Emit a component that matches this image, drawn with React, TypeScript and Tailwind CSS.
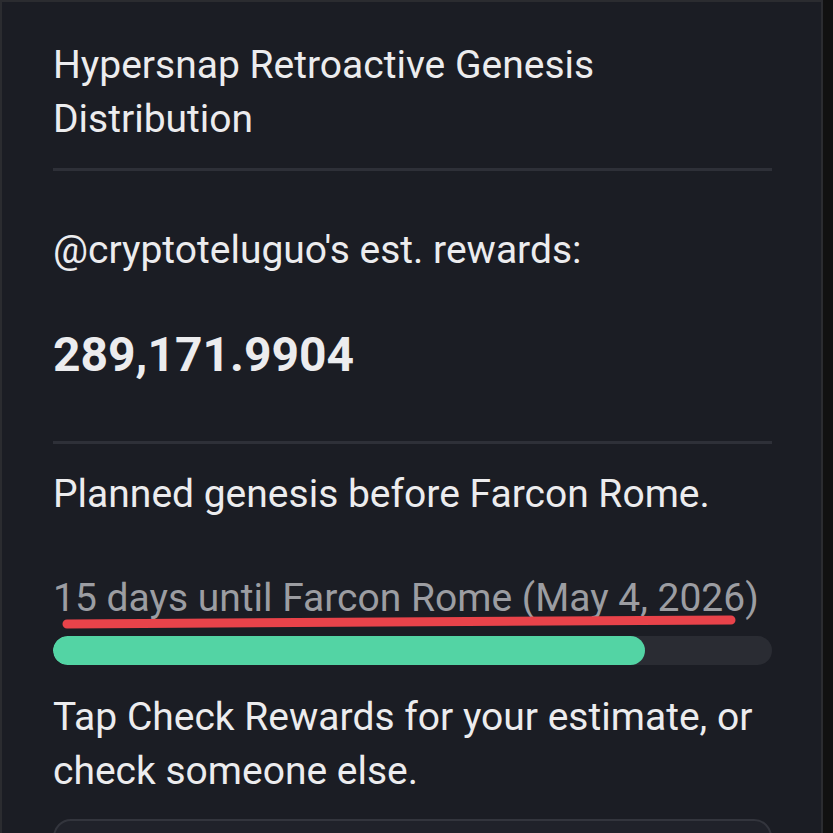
import React from 'react';

export default function App() {
  const progress = 82.3;

  return (
    <div className="w-[833px] h-[833px] overflow-hidden bg-[#111111]" style={{ fontFamily: 'Roboto, "Noto Sans", sans-serif' }}>
      <div className="relative w-[823px] h-[900px] bg-[#1b1d24] border-2 border-[#2b2c30] pl-[51px] pr-[49px] pt-[36px] text-[#ececee]">
        <h1 className="text-[39px] leading-[54px] font-normal">Hypersnap Retroactive Genesis Distribution</h1>

        <div className="mt-[22px] h-[3px] bg-[#2e3038]" />

        <p className="mt-[51px] text-[39px] leading-[57px]">@cryptoteluguo's est. rewards:</p>

        <p className="mt-[40px] text-[48px] leading-[72px] font-bold">289,171.9904</p>

        <div className="mt-[50px] h-[3px] bg-[#2e3038]" />

        <p className="mt-[22px] text-[39px] leading-[57px]">Planned genesis before Farcon Rome.</p>

        <p className="mt-[47px] text-[39px] leading-[57px] text-[#9c9da2]">15 days until Farcon Rome (May 4, 2026)</p>

        <div className="mt-[9px] h-[29px] rounded-full bg-[#2a2c33] overflow-hidden">
          <div className="h-full rounded-full bg-[#53d4a4]" style={{ width: `${progress}%` }} />
        </div>

        <p className="mt-[25px] text-[39px] leading-[54px]">Tap Check Rewards for your estimate, or check someone else.</p>

        <div className="mt-[21px] h-[80px] rounded-[18px] border-2 border-[#33353d] bg-[#20222a]" />

        {/* red marker annotation */}
        <svg className="absolute left-0 top-0 pointer-events-none" width="823" height="833">
          <line x1="65" y1="622" x2="729" y2="618" stroke="#e8434a" strokeWidth="9" strokeLinecap="round" />
        </svg>
      </div>
    </div>
  );
}
